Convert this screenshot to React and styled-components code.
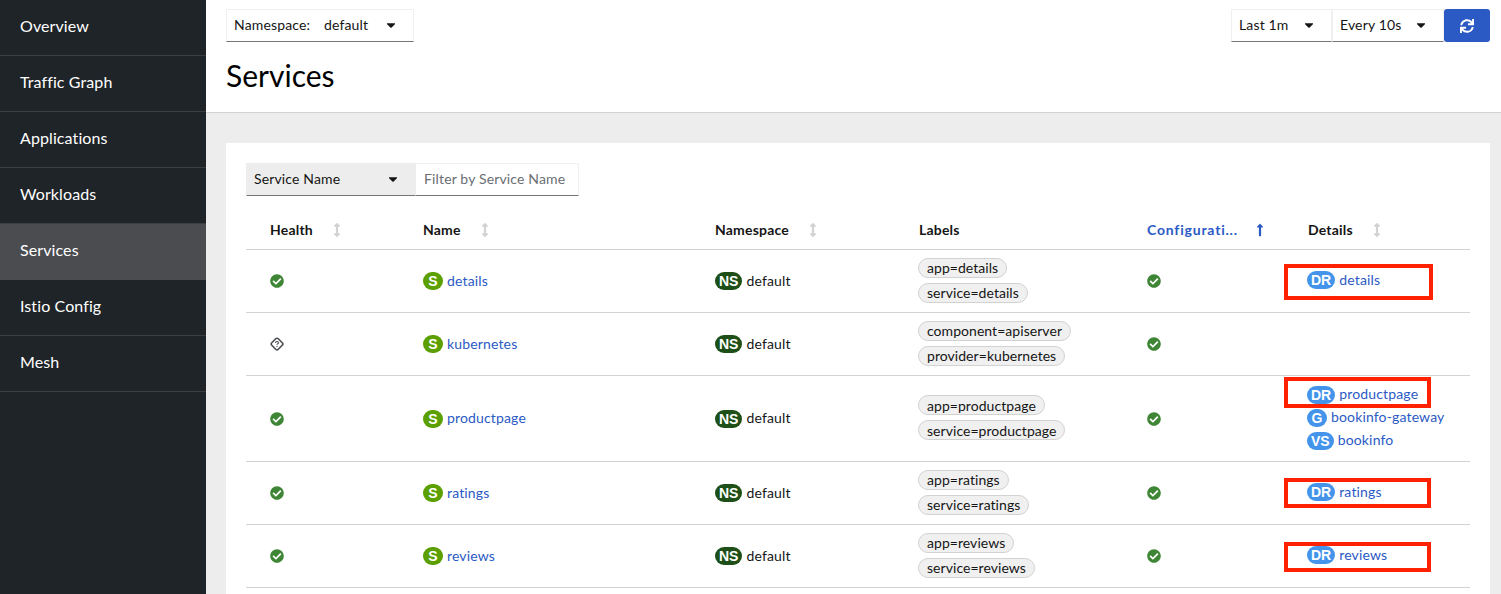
import React from "react"
import styled, { createGlobalStyle } from "styled-components"
import { FaCaretDown, FaCheckCircle, FaSync, FaArrowsAltV, FaLongArrowAltUp } from "react-icons/fa"

const font = `"Lato", "Liberation Sans", sans-serif`
const blue = "#2b5ac5"

const GlobalStyle = createGlobalStyle`
  html, body { margin: 0; height: 100%; overflow: hidden; }
  body { font-family: ${font}; font-size: 14px; letter-spacing: .15px; color: #151515; background: #fff; }
  #root { height: 100%; }
`

const Page = styled.div`
  display: flex;
  height: 594px;
  overflow: hidden;
`

const Sidebar = styled.nav`
  width: 206px;
  flex: none;
  background: #1f2428;
`

const NavItem = styled.div`
  height: 56px;
  box-sizing: border-box;
  display: flex;
  align-items: center;
  padding: 0 0 4px 20px;
  font-size: 16px;
  letter-spacing: .1px;
  color: #fff;
  border-bottom: 1px solid #3c3f42;
  background: ${p => (p.$active ? "#4a4c50" : "transparent")};
  border-bottom-color: ${p => (p.$active ? "#4a4c50" : "#3c3f42")};
`

const Main = styled.main`
  flex: 1;
  min-width: 0;
  display: flex;
  flex-direction: column;
  background: #ededed;
`

const Header = styled.header`
  height: 113px;
  box-sizing: border-box;
  flex: none;
  background: #fff;
  border-bottom: 1px solid #d2d2d2;
  padding: 9px 11px 0 20px;
`

const HeaderTop = styled.div`
  display: flex;
  justify-content: space-between;
`

const Title = styled.h1`
  margin: 13px 0 0;
  font-size: 30px;
  font-weight: 400;
  line-height: 40px;
  letter-spacing: 0;
  color: #000;
`

const Select = styled.div`
  height: 33px;
  box-sizing: border-box;
  width: ${p => p.$width}px;
  display: flex;
  align-items: center;
  justify-content: space-between;
  padding: 0 15px 2px 7px;
  border: 1px solid #f0f0f0;
  border-bottom-color: #72767b;
  background: ${p => (p.$filled ? "#ededed" : "#fff")};
  border-top-color: ${p => (p.$filled ? "#ededed" : "#f0f0f0")};
  border-left-color: ${p => (p.$filled ? "#ededed" : "#f0f0f0")};
  border-right-color: ${p => (p.$filled ? "#ededed" : "#f0f0f0")};
  svg { font-size: 14px; color: #151515; }
`

const SelectLabel = styled.span`
  display: inline-block;
  width: 90px;
`

const SelectGroup = styled.div`
  display: flex;
`

const RefreshButton = styled.button`
  width: 46px;
  height: 33px;
  border: 0;
  border-radius: 3px;
  background: ${blue};
  color: #fff;
  display: flex;
  align-items: center;
  justify-content: center;
  font-size: 14px;
`

const Content = styled.section`
  flex: 1;
  padding: 30px 11px 0 20px;
`

const Card = styled.div`
  background: #fff;
  height: 470px;
  padding: 20px;
  box-sizing: border-box;
`

const Toolbar = styled.div`
  display: flex;
  height: 33px;
`

const FilterInput = styled.div`
  width: 163px;
  box-sizing: border-box;
  display: flex;
  align-items: center;
  padding: 0 0 2px 8px;
  color: #6a6e73;
  border: 1px solid #f0f0f0;
  border-left: 0;
  border-bottom-color: #72767b;
`

const Row = styled.div`
  display: grid;
  grid-template-columns: 153px 292px 204px 228px 161px 1fr;
  align-items: center;
  height: ${p => p.$height}px;
  box-sizing: border-box;
  border-bottom: 1px solid #d2d2d2;
`

const HeadRow = styled(Row)`
  padding-top: 14px;
`

const Cell = styled.div`
  padding-left: 24px;
  display: flex;
  align-items: center;
  position: relative;
`

const StackCell = styled(Cell)`
  flex-direction: column;
  align-items: flex-start;
  margin-bottom: 2px;
`

const HeadCell = styled(Cell)`
  font-weight: 700;
  gap: ${p => (p.$sorted ? 15 : 17)}px;
  letter-spacing: ${p => (p.$sorted ? ".8px" : ".2px")};
  color: ${p => (p.$sorted ? blue : "#151515")};
`

const SortIcon = styled(FaArrowsAltV)`
  color: #d2d2d2;
  font-size: 14px;
`

const SortedIcon = styled(FaLongArrowAltUp)`
  color: ${blue};
  font-size: 14px;
`

const OkIcon = styled(FaCheckCircle)`
  color: #3e8635;
  font-size: 14px;
`

const Badge = styled.span`
  flex: none;
  height: 18px;
  min-width: 20px;
  box-sizing: border-box;
  padding: 0 4px;
  margin-right: 5px;
  border-radius: 9px;
  display: inline-flex;
  align-items: center;
  justify-content: center;
  color: #fff;
  font-family: "Liberation Sans", sans-serif;
  font-size: 14px;
  font-weight: 700;
  letter-spacing: 0;
  background: ${p => p.$color};
`

const CellText = styled.span`
  padding-bottom: 2px;
  margin-left: -1px;
  color: ${p => (p.$link ? blue : "#151515")};
`

const Pill = styled.span`
  height: 20px;
  box-sizing: border-box;
  display: inline-flex;
  align-items: center;
  padding: 0 8px;
  border-radius: 10px;
  border: 1px solid #d2d2d2;
  background: #f0f0f0;
  margin-left: -1px;
  letter-spacing: .05px;
  & + & { margin-top: 5px; }
`

const DetailLine = styled.div`
  height: 23px;
  display: flex;
  align-items: center;
  margin-left: -1px;
`

const Callout = styled.div`
  position: absolute;
  left: 0;
  top: ${p => p.$top}px;
  width: ${p => p.$width}px;
  height: ${p => p.$height}px;
  box-sizing: border-box;
  border: 4px solid #ff2200;
  pointer-events: none;
`

const UnknownIcon = () => (
  <svg width="14" height="14" viewBox="0 0 14 14" fill="none">
    <rect x="2.4" y="2.4" width="9.2" height="9.2" rx="1.8" transform="rotate(45 7 7)" stroke="#4f5255" strokeWidth="1.7" />
    <path d="M5.5 5.9c0-.9.7-1.4 1.5-1.4s1.5.5 1.5 1.3c0 1-1.5 1-1.5 2" stroke="#4f5255" strokeWidth="1.1" />
    <circle cx="7" cy="9.4" r=".7" fill="#4f5255" />
  </svg>
)

const BADGE_BLUE = "#4394ea"

const services = [
  {
    name: "details",
    height: 63,
    labels: ["app=details", "service=details"],
    details: [{ tag: "DR", name: "details" }],
    callout: { top: -5, width: 149, height: 36 },
  },
  {
    name: "kubernetes",
    height: 63,
    unknown: true,
    labels: ["component=apiserver", "provider=kubernetes"],
    details: [],
  },
  {
    name: "productpage",
    height: 86,
    labels: ["app=productpage", "service=productpage"],
    details: [
      { tag: "DR", name: "productpage" },
      { tag: "G", name: "bookinfo-gateway" },
      { tag: "VS", name: "bookinfo" },
    ],
    callout: { top: -6, width: 147, height: 31 },
  },
  {
    name: "ratings",
    height: 63,
    labels: ["app=ratings", "service=ratings"],
    details: [{ tag: "DR", name: "ratings" }],
    callout: { top: -3, width: 147, height: 30 },
  },
  {
    name: "reviews",
    height: 63,
    labels: ["app=reviews", "service=reviews"],
    details: [{ tag: "DR", name: "reviews" }],
    callout: { top: -2, width: 147, height: 30 },
  },
]

const navItems = ["Overview", "Traffic Graph", "Applications", "Workloads", "Services", "Istio Config", "Mesh"]

export default function App() {
  return (
    <Page>
      <GlobalStyle />
      <Sidebar>
        {navItems.map(item => (
          <NavItem key={item} $active={item === "Services"}>{item}</NavItem>
        ))}
      </Sidebar>
      <Main>
        <Header>
          <HeaderTop>
            <Select $width={188}>
              <span><SelectLabel>Namespace:</SelectLabel>default</span>
              <FaCaretDown />
            </Select>
            <SelectGroup>
              <Select $width={101}>Last 1m<FaCaretDown /></Select>
              <Select $width={112}>Every 10s<FaCaretDown /></Select>
              <RefreshButton><FaSync /></RefreshButton>
            </SelectGroup>
          </HeaderTop>
          <Title>Services</Title>
        </Header>
        <Content>
          <Card>
            <Toolbar>
              <Select $width={170} $filled>Service Name<FaCaretDown /></Select>
              <FilterInput>Filter by Service Name</FilterInput>
            </Toolbar>
            <HeadRow $height={54}>
              <HeadCell>Health<SortIcon /></HeadCell>
              <HeadCell>Name<SortIcon /></HeadCell>
              <HeadCell>Namespace<SortIcon /></HeadCell>
              <HeadCell>Labels</HeadCell>
              <HeadCell $sorted>Configurati...<SortedIcon /></HeadCell>
              <HeadCell>Details<SortIcon /></HeadCell>
            </HeadRow>
            {services.map(s => (
              <Row key={s.name} $height={s.height}>
                <Cell>{s.unknown ? <UnknownIcon /> : <OkIcon />}</Cell>
                <Cell><Badge $color="#5ba000">S</Badge><CellText $link>{s.name}</CellText></Cell>
                <Cell><Badge $color="#1e4f18">NS</Badge><CellText>default</CellText></Cell>
                <StackCell>{s.labels.map(l => <Pill key={l}>{l}</Pill>)}</StackCell>
                <Cell><OkIcon /></Cell>
                <StackCell>
                  {s.details.map(d => (
                    <DetailLine key={d.tag}>
                      <Badge $color={BADGE_BLUE}>{d.tag}</Badge>
                      <CellText $link>{d.name}</CellText>
                    </DetailLine>
                  ))}
                  {s.callout && <Callout $top={s.callout.top} $width={s.callout.width} $height={s.callout.height} />}
                </StackCell>
              </Row>
            ))}
          </Card>
        </Content>
      </Main>
    </Page>
  )
}
